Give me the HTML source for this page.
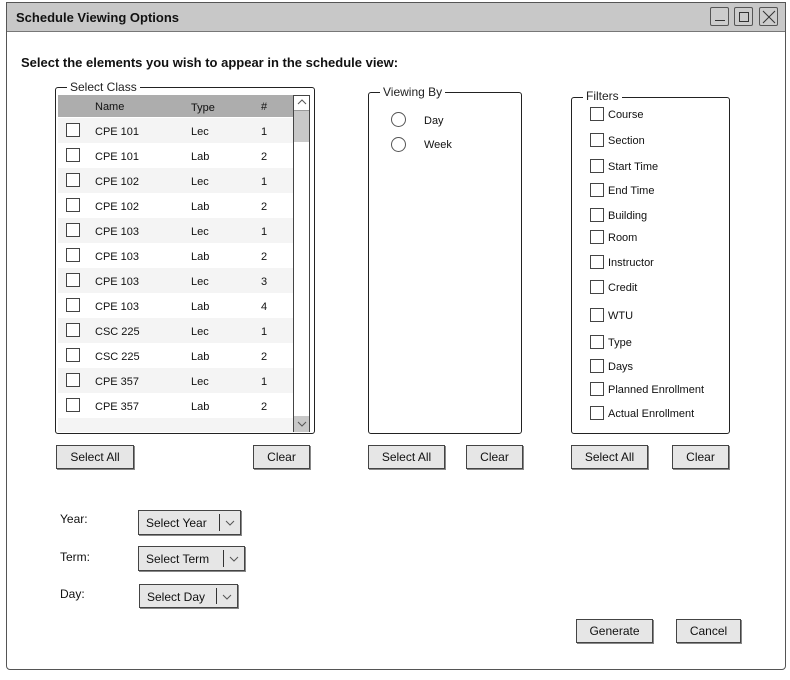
<!DOCTYPE html>
<html><head><meta charset="utf-8"><style>
*{box-sizing:border-box;margin:0;padding:0}
body{width:790px;height:680px;background:#fff;position:relative;font-family:"Liberation Sans",Arial,sans-serif;font-size:11px;color:#111;overflow:hidden}
.a{position:absolute}
.win{left:6px;top:2px;width:780px;height:668px;border:1px solid #555;border-radius:0 0 4px 4px}
.title{left:7px;top:3px;width:778px;height:29px;background:#c8c8c8;border-bottom:1px solid #777}
.tb{width:19px;height:19px;border:1px solid #555;border-radius:2px;background:#ccc}
.box{border:1px solid #222;border-radius:3px}
.leg{background:#fff;padding:0 3px;font-size:12px;color:#222}
.btn{background:#e6e6e6;border:1px solid #444;box-shadow:1px 1px 0 #888;text-align:center;font-size:12px;line-height:23px}
.cb{width:14px;height:14px;border:1px solid #444;background:#fff}
.row{left:58px;width:235px;height:25px;font-size:11px}
.row span{position:absolute;top:8px}
.dd{background:#e6e6e6;border:1px solid #444;box-shadow:1px 1px 0 #888;font-size:12px;line-height:24px;padding-left:7px}
.dd i{position:absolute;top:3px;bottom:3px;width:1px;background:#333}
.lbl{font-size:11px}
</style></head><body>
<div class="a win"></div>
<div class="a title"></div>
<div class="a" style="left:16px;top:10px;font-size:13px;font-weight:bold">Schedule Viewing Options</div>
<div class="a tb" style="left:710px;top:7px"><div class="a" style="left:4px;top:12px;width:10px;height:1px;background:#333"></div></div>
<div class="a tb" style="left:734px;top:7px"><div class="a" style="left:4px;top:4px;width:10px;height:10px;border:1px solid #333"></div></div>
<div class="a tb" style="left:759px;top:7px"><svg class="a" style="left:2px;top:2px" width="14" height="14"><path d="M1 1L13 13M13 1L1 13" stroke="#333" stroke-width="1"/></svg></div>
<div class="a" style="left:21px;top:55px;font-size:13px;font-weight:bold">Select the elements you wish to appear in the schedule view:</div>

<div class="a box" style="left:55px;top:87px;width:260px;height:347px"></div>
<div class="a leg" style="left:67px;top:80px">Select Class</div>
<div class="a" style="left:58px;top:95px;width:235px;height:22px;background:#adadad"></div>
<div class="a" style="left:95px;top:101px">Name</div>
<div class="a" style="left:191px;top:102px">Type</div>
<div class="a" style="left:261px;top:101px">#</div>
<div class="a" style="left:293px;top:95px;width:17px;height:337px;border:1px solid #444;background:#fff"></div>
<div class="a" style="left:294px;top:110px;width:15px;height:32px;background:#c8c8c8;border-top:1px solid #999"></div>
<svg class="a" style="left:296px;top:97px" width="12" height="10"><path d="M2 7L6 3L10 7" stroke="#555" fill="none"/></svg>
<div class="a" style="left:294px;top:416px;width:15px;height:16px;background:#c8c8c8"></div>
<svg class="a" style="left:296px;top:419px" width="12" height="10"><path d="M2 3L6 7L10 3" stroke="#555" fill="none"/></svg>
<div id="rows"></div>

<div class="a btn" style="left:56px;top:445px;width:78px;height:24px">Select All</div>
<div class="a btn" style="left:253px;top:445px;width:57px;height:24px">Clear</div>

<div class="a box" style="left:368px;top:92px;width:154px;height:342px"></div>
<div class="a leg" style="left:380px;top:85px">Viewing By</div>
<div class="a" style="left:391px;top:112px;width:15px;height:15px;border:1px solid #555;border-radius:50%"></div>
<div class="a" style="left:391px;top:137px;width:15px;height:15px;border:1px solid #555;border-radius:50%"></div>
<div class="a" style="left:424px;top:115px">Day</div>
<div class="a" style="left:424px;top:139px">Week</div>
<div class="a btn" style="left:368px;top:445px;width:77px;height:24px">Select All</div>
<div class="a btn" style="left:466px;top:445px;width:57px;height:24px">Clear</div>

<div class="a box" style="left:571px;top:97px;width:159px;height:337px"></div>
<div class="a leg" style="left:583px;top:89px">Filters</div>
<div id="f"></div>
<div class="a btn" style="left:571px;top:445px;width:77px;height:24px">Select All</div>
<div class="a btn" style="left:672px;top:445px;width:57px;height:24px">Clear</div>

<div class="a lbl" style="left:60px;top:512px;font-size:12px">Year:</div>
<div class="a lbl" style="left:60px;top:550px;font-size:12px">Term:</div>
<div class="a lbl" style="left:60px;top:587px;font-size:12px">Day:</div>
<div class="a dd" style="left:138px;top:510px;width:103px;height:25px">Select Year<i style="left:80px"></i><svg class="a" style="left:85px;top:7px" width="12" height="10"><path d="M2 3L6 7L10 3" stroke="#555" fill="none"/></svg></div>
<div class="a dd" style="left:138px;top:546px;width:107px;height:25px">Select Term<i style="left:84px"></i><svg class="a" style="left:89px;top:7px" width="12" height="10"><path d="M2 3L6 7L10 3" stroke="#555" fill="none"/></svg></div>
<div class="a dd" style="left:139px;top:584px;width:99px;height:24px">Select Day<i style="left:76px"></i><svg class="a" style="left:81px;top:7px" width="12" height="10"><path d="M2 3L6 7L10 3" stroke="#555" fill="none"/></svg></div>

<div class="a btn" style="left:576px;top:619px;width:77px;height:24px">Generate</div>
<div class="a btn" style="left:676px;top:619px;width:65px;height:24px">Cancel</div>

<script>
var r=[["CPE 101","Lec",1],["CPE 101","Lab",2],["CPE 102","Lec",1],["CPE 102","Lab",2],["CPE 103","Lec",1],["CPE 103","Lab",2],["CPE 103","Lec",3],["CPE 103","Lab",4],["CSC 225","Lec",1],["CSC 225","Lab",2],["CPE 357","Lec",1],["CPE 357","Lab",2],["","",""]],h="";
r.forEach(function(x,i){var y=118+i*25;h+='<div class="a row" style="top:'+y+'px;height:'+(i==12?14:25)+'px;background:'+(i%2?'#fff':'#f4f4f4')+'">'+(x[0]?'<div class="a cb" style="left:8px;top:5px"></div><span style="left:37px">'+x[0]+'</span><span style="left:133px">'+x[1]+'</span><span style="left:203px">'+x[2]+'</span>':'')+'</div>';});
document.getElementById("rows").innerHTML=h;
var f=[["Course",115],["Section",141],["Start Time",167],["End Time",191],["Building",216],["Room",238],["Instructor",263],["Credit",288],["WTU",316],["Type",343],["Days",367],["Planned Enrollment",390],["Actual Enrollment",414]],g="";
f.forEach(function(x){g+='<div class="a cb" style="left:590px;top:'+(x[1]-8)+'px"></div><div class="a" style="left:608px;top:'+(x[1]-6)+'px">'+x[0]+'</div>';});
document.getElementById("f").innerHTML=g;
</script>
</body></html>
